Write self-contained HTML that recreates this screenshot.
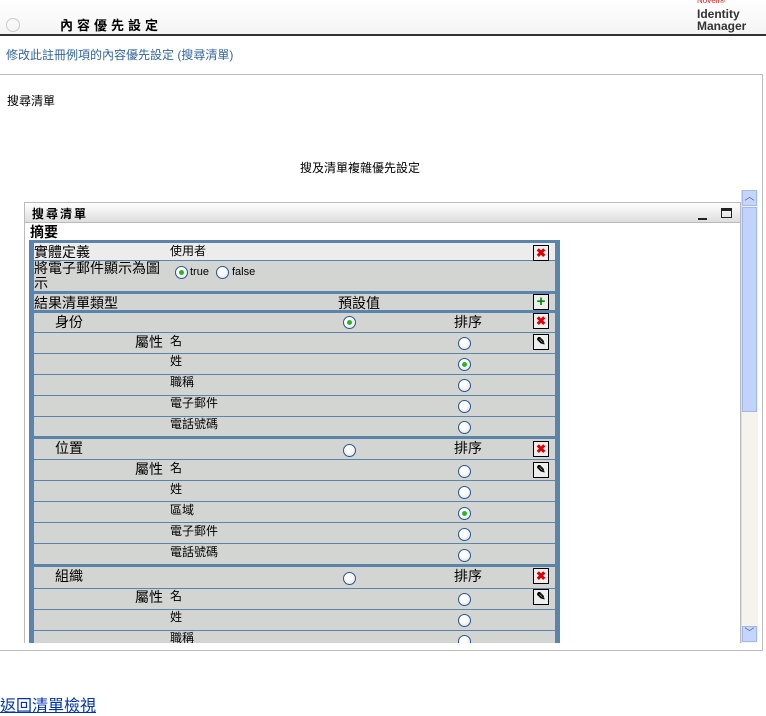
<!DOCTYPE html>
<html><head><meta charset="utf-8"><style>
*{margin:0;padding:0;box-sizing:border-box}
body{width:766px;height:712px;background:#fff;position:relative;overflow:hidden;font-family:"Liberation Sans","Noto Sans CJK TC",sans-serif;font-size:12px;color:#000}
.a{position:absolute;white-space:nowrap}
.row{position:absolute;left:34px;width:521px;background:#d3d5d2}
.ln{position:absolute;left:34px;width:521px;height:1px;background:#5b84ab}
.th{position:absolute;left:29px;width:531px;height:3px;background:#5b84ab}
.rb{position:absolute;width:13px;height:13px;border-radius:50%;border:1px solid #2a5590;background:radial-gradient(circle at 40% 35%,#fff 30%,#dcdcdc 100%)}
.rb.on::after{content:"";position:absolute;left:3px;top:3px;width:5px;height:5px;border-radius:50%;background:#2bb52b}
.bt{position:absolute;left:533px;width:16px;height:16px;border:1px solid #000;background:#eee;font-size:12px;line-height:14px;text-align:center;font-weight:bold}
.x{color:#d00}.p{color:#080;font-size:15px}
.t14{font-size:14px}
</style></head><body>
<!-- header -->
<div class="a" style="left:0;top:0;width:766px;height:35px;background:linear-gradient(#fff,#f4f4f4)"></div>
<div class="a" style="left:6px;top:18px;width:14px;height:14px;border-radius:50%;border:1px solid #ccc"></div>
<div class="a" style="left:60px;top:15px;font-size:13px;font-weight:bold;letter-spacing:4px">內容優先設定</div>
<div class="a" style="left:697px;top:-4px;font-size:8px;color:#d02020">Novell®</div>
<div class="a" style="left:697px;top:8px;font-size:12px;line-height:12px;color:#333;font-weight:bold">Identity<br>Manager</div>
<div class="a" style="left:0;top:34px;width:766px;height:2px;background:#333"></div>
<div class="a" style="left:6px;top:46px;color:#336699">修改此註冊例項的內容優先設定 (搜尋清單)</div>
<!-- main box -->
<div class="a" style="left:0;top:74px;width:763px;height:577px;border-top:1px solid #bbb;border-right:1px solid #bbb;border-bottom:1px solid #bbb"></div>
<div class="a" style="left:7px;top:92px">搜尋清單</div>
<div class="a" style="left:300px;top:159px">搜及清單複雜優先設定</div>
<!-- scroll area -->
<div class="a" style="left:24px;top:190px;width:734px;height:453px;overflow:hidden">
 <div style="position:absolute;left:0;top:12px;width:717px;height:460px;border:1px solid #bbb;border-bottom:none"></div>
 <div style="position:absolute;left:1px;top:13px;width:715px;height:20px;background:linear-gradient(#fff,#ddd);border-bottom:1px solid #bbb"></div>
 <div class="a" style="left:8px;top:15px;font-weight:bold;letter-spacing:2px">搜尋清單</div>
 <div class="a" style="left:674px;top:28px;width:9px;height:2px;background:#222"></div>
 <div class="a" style="left:697px;top:18px;width:11px;height:10px;border:1px solid #222;border-top:3px solid #222"></div>
 <div class="a t14" style="left:6px;top:32px;font-weight:bold">摘要</div>
 <!-- scrollbar -->
 <div class="a" style="left:717px;top:0;width:17px;height:453px;background:#f4f3ee;border-left:1px solid #ddd"></div>
 <div class="a" style="left:718px;top:0;width:15px;height:16px;background:#c6d6fb;border:1px solid #a0b8ee;color:#4d6185;font-size:10px;text-align:center;line-height:14px">︿</div>
 <div class="a" style="left:718px;top:17px;width:15px;height:205px;background:#c1d3fb;border:1px solid #a0b8ee"></div>
 <div class="a" style="left:718px;top:436px;width:15px;height:16px;background:#c6d6fb;border:1px solid #a0b8ee;color:#4d6185;font-size:10px;text-align:center;line-height:14px">﹀</div>
</div>
<div class="a" style="left:0;top:0;width:766px;height:643px;overflow:hidden">
 <div class="a" style="left:29px;top:240px;width:531px;height:420px;background:#5b84ab"></div>
 <div class="row" style="top:243px;height:17px;background:#ececec"></div>
 <div class="ln" style="top:260px"></div>
 <div class="row" style="top:261px;height:30px"></div>
 <div class="th" style="top:291px"></div>
 <div class="row" style="top:294px;height:16px"></div>
 <div class="th" style="top:310px"></div>
 <div class="row" style="top:313px;height:19px"></div>
 <div class="ln" style="top:332px"></div>
 <div class="row" style="top:333px;height:20px"></div><div class="ln" style="top:353px"></div>
 <div class="row" style="top:354px;height:20px"></div><div class="ln" style="top:374px"></div>
 <div class="row" style="top:375px;height:20px"></div><div class="ln" style="top:395px"></div>
 <div class="row" style="top:396px;height:20px"></div><div class="ln" style="top:416px"></div>
 <div class="row" style="top:417px;height:19px"></div>
 <div class="th" style="top:436px"></div>
 <div class="row" style="top:439px;height:20px"></div><div class="ln" style="top:459px"></div>
 <div class="row" style="top:460px;height:20px"></div><div class="ln" style="top:480px"></div>
 <div class="row" style="top:481px;height:20px"></div><div class="ln" style="top:501px"></div>
 <div class="row" style="top:502px;height:20px"></div><div class="ln" style="top:522px"></div>
 <div class="row" style="top:523px;height:20px"></div><div class="ln" style="top:543px"></div>
 <div class="row" style="top:544px;height:20px"></div>
 <div class="th" style="top:564px"></div>
 <div class="row" style="top:567px;height:21px"></div><div class="ln" style="top:588px"></div>
 <div class="row" style="top:589px;height:20px"></div><div class="ln" style="top:609px"></div>
 <div class="row" style="top:610px;height:20px"></div><div class="ln" style="top:630px"></div>
 <div class="row" style="top:631px;height:20px"></div>

 <div class="a t14" style="left:34px;top:242px">實體定義</div>
 <div class="a" style="left:170px;top:242px">使用者</div>
 <div class="bt x" style="top:245px">✖</div>
 <div class="a t14" style="left:34px;top:261px;line-height:15px;white-space:normal;width:130px">將電子郵件顯示為圖示</div>
 <div class="rb on" style="left:175px;top:266px"></div><div class="a" style="left:190px;top:266px;font-size:11px">true</div>
 <div class="rb" style="left:216px;top:266px"></div><div class="a" style="left:232px;top:266px;font-size:11px">false</div>
 <div class="a t14" style="left:34px;top:293px">結果清單類型</div>
 <div class="a t14" style="left:338px;top:293px">預設值</div>
 <div class="bt p" style="top:294px">+</div>

 <div class="a t14" style="left:55px;top:312px">身份</div>
 <div class="rb on" style="left:343px;top:316px"></div>
 <div class="a t14" style="left:454px;top:312px">排序</div>
 <div class="bt x" style="top:313px">✖</div>
 <div class="a t14" style="left:135px;top:332px">屬性</div><div class="a" style="left:170px;top:332px">名</div>
 <div class="rb" style="left:458px;top:337px"></div><div class="bt" style="top:334px;font-size:11px">✎</div>
 <div class="a" style="left:170px;top:352px">姓</div><div class="rb on" style="left:458px;top:358px"></div>
 <div class="a" style="left:170px;top:373px">職稱</div><div class="rb" style="left:458px;top:379px"></div>
 <div class="a" style="left:170px;top:394px">電子郵件</div><div class="rb" style="left:458px;top:400px"></div>
 <div class="a" style="left:170px;top:415px">電話號碼</div><div class="rb" style="left:458px;top:421px"></div>

 <div class="a t14" style="left:55px;top:438px">位置</div>
 <div class="rb" style="left:343px;top:444px"></div>
 <div class="a t14" style="left:454px;top:438px">排序</div>
 <div class="bt x" style="top:441px">✖</div>
 <div class="a t14" style="left:135px;top:459px">屬性</div><div class="a" style="left:170px;top:459px">名</div>
 <div class="rb" style="left:458px;top:465px"></div><div class="bt" style="top:462px;font-size:11px">✎</div>
 <div class="a" style="left:170px;top:480px">姓</div><div class="rb" style="left:458px;top:486px"></div>
 <div class="a" style="left:170px;top:501px">區域</div><div class="rb on" style="left:458px;top:507px"></div>
 <div class="a" style="left:170px;top:522px">電子郵件</div><div class="rb" style="left:458px;top:528px"></div>
 <div class="a" style="left:170px;top:543px">電話號碼</div><div class="rb" style="left:458px;top:549px"></div>

 <div class="a t14" style="left:55px;top:566px">組織</div>
 <div class="rb" style="left:343px;top:572px"></div>
 <div class="a t14" style="left:454px;top:566px">排序</div>
 <div class="bt x" style="top:568px">✖</div>
 <div class="a t14" style="left:135px;top:587px">屬性</div><div class="a" style="left:170px;top:587px">名</div>
 <div class="rb" style="left:458px;top:593px"></div><div class="bt" style="top:589px;font-size:11px">✎</div>
 <div class="a" style="left:170px;top:608px">姓</div><div class="rb" style="left:458px;top:614px"></div>
 <div class="a" style="left:170px;top:629px">職稱</div><div class="rb" style="left:458px;top:635px"></div>
</div>
<div class="a" style="left:0;top:692px;font-size:16px;color:#0033aa;text-decoration:underline">返回清單檢視</div>
</body></html>
